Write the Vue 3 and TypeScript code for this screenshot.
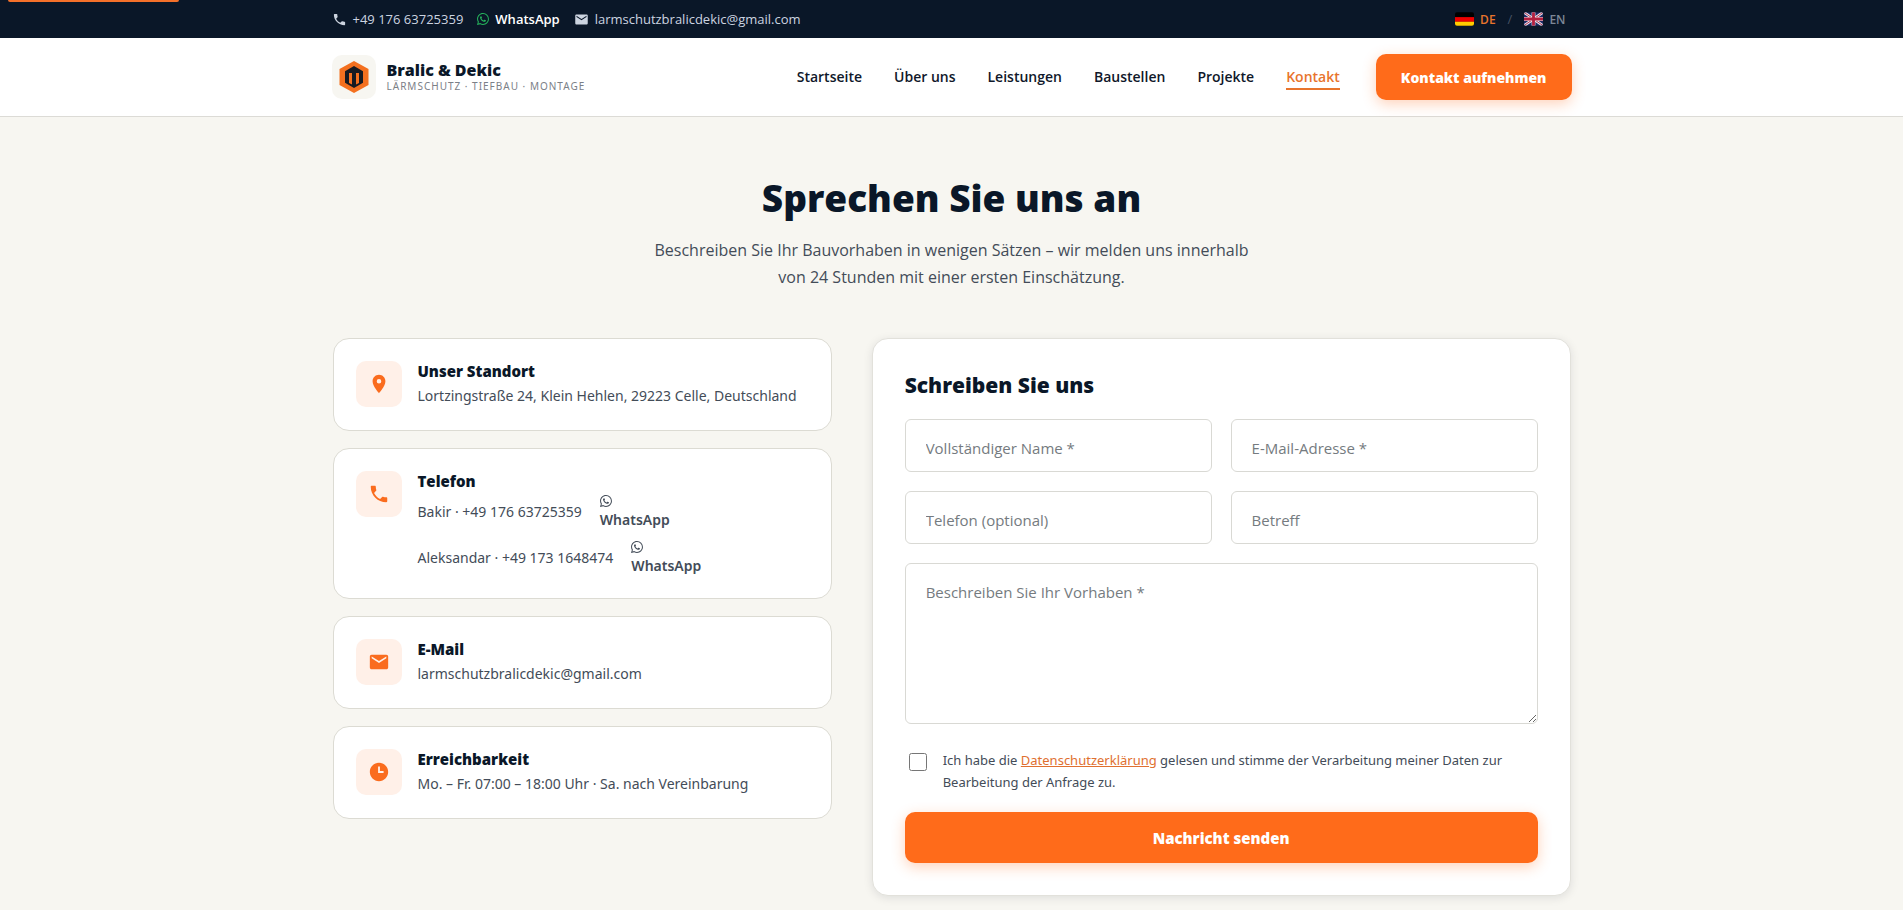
<script setup lang="ts">
import { ref } from 'vue'

interface NavItem { label: string; href: string; active?: boolean }
interface InfoCard { title: string; icon: string; text?: string; href?: string }

const nav: NavItem[] = [
  { label: 'Startseite', href: '#start' },
  { label: 'Über uns', href: '#ueber-uns' },
  { label: 'Leistungen', href: '#leistungen' },
  { label: 'Baustellen', href: '#baustellen' },
  { label: 'Projekte', href: '#projekte' },
  { label: 'Kontakt', href: '#kontakt', active: true },
]

const icons: Record<string, string> = {
  pin: 'M12 2C8.13 2 5 5.13 5 9c0 5.25 7 13 7 13s7-7.75 7-13c0-3.87-3.13-7-7-7zm0 9.5a2.5 2.5 0 0 1 0-5 2.5 2.5 0 0 1 0 5z',
  phone: 'M6.62 10.79c1.44 2.83 3.76 5.14 6.59 6.59l2.2-2.2c.27-.27.67-.36 1.02-.24 1.12.37 2.33.57 3.57.57.55 0 1 .45 1 1V20c0 .55-.45 1-1 1-9.39 0-17-7.61-17-17 0-.55.45-1 1-1h3.5c.55 0 1 .45 1 1 0 1.25.2 2.45.57 3.57.11.35.03.74-.25 1.02l-2.2 2.2z',
  mail: 'M20 4H4c-1.1 0-1.99.9-1.99 2L2 18c0 1.1.9 2 2 2h16c1.1 0 2-.9 2-2V6c0-1.1-.9-2-2-2zm0 4l-8 5-8-5V6l8 5 8-5v2z',
  clock: 'M12 2C6.48 2 2 6.48 2 12s4.48 10 10 10 10-4.48 10-10S17.52 2 12 2zm5 11h-6V6h2v5h4v2z',
}
const whatsapp =
  'M13.601 2.326A7.85 7.85 0 0 0 7.994 0C3.627 0 .068 3.558.064 7.926c0 1.399.366 2.76 1.057 3.965L0 16l4.204-1.102a7.9 7.9 0 0 0 3.79.965h.004c4.368 0 7.926-3.558 7.93-7.93A7.9 7.9 0 0 0 13.6 2.326zM7.994 14.521a6.6 6.6 0 0 1-3.356-.92l-.24-.144-2.494.654.666-2.433-.156-.251a6.56 6.56 0 0 1-1.007-3.505c0-3.626 2.957-6.584 6.591-6.584a6.56 6.56 0 0 1 4.66 1.931 6.56 6.56 0 0 1 1.928 4.66c-.004 3.639-2.961 6.592-6.592 6.592m3.615-4.934c-.197-.099-1.17-.578-1.353-.646-.182-.065-.315-.099-.445.099-.133.197-.513.646-.627.775-.114.133-.232.148-.43.05-.197-.1-.836-.308-1.592-.985-.59-.525-.985-1.175-1.103-1.372-.114-.198-.011-.304.088-.403.087-.088.197-.232.296-.346.1-.114.133-.198.198-.33.065-.134.034-.248-.015-.347-.05-.099-.445-1.076-.612-1.47-.16-.389-.323-.335-.445-.34-.114-.007-.247-.007-.38-.007a.73.73 0 0 0-.529.247c-.182.198-.691.677-.691 1.654s.71 1.916.81 2.049c.098.133 1.394 2.132 3.383 2.992.47.205.84.326 1.129.418.475.152.904.129 1.246.08.38-.058 1.171-.48 1.338-.943.164-.464.164-.86.114-.943-.049-.084-.182-.133-.38-.232'

const cards: InfoCard[] = [
  { title: 'Unser Standort', icon: 'pin', text: 'Lortzingstraße 24, Klein Hehlen, 29223 Celle, Deutschland' },
  { title: 'Telefon', icon: 'phone' },
  { title: 'E-Mail', icon: 'mail', text: 'larmschutzbralicdekic@gmail.com', href: 'mailto:larmschutzbralicdekic@gmail.com' },
  { title: 'Erreichbarkeit', icon: 'clock', text: 'Mo. – Fr. 07:00 – 18:00 Uhr · Sa. nach Vereinbarung' },
]
const phones = [
  { name: 'Bakir', number: '+49 176 63725359' },
  { name: 'Aleksandar', number: '+49 173 1648474' },
]
const fields = [
  { id: 'name', type: 'text', label: 'Vollständiger Name *' },
  { id: 'email', type: 'email', label: 'E-Mail-Adresse *' },
  { id: 'phone', type: 'tel', label: 'Telefon (optional)' },
  { id: 'subject', type: 'text', label: 'Betreff' },
]
const values = ref<Record<string, string>>({ name: '', email: '', phone: '', subject: '' })
const message = ref('')
const consent = ref(false)
</script>

<template>
  <div class="page">
    <div class="accent" aria-hidden="true"></div>
    <div class="topbar">
      <div class="container topbar-row">
        <div class="contacts">
          <a href="tel:+4917663725359"><svg viewBox="0 0 24 24"><path :d="icons.phone" /></svg>+49 176 63725359</a>
          <a class="wa" href="#whatsapp"><svg viewBox="0 0 16 16"><path :d="whatsapp" /></svg>WhatsApp</a>
          <a href="mailto:larmschutzbralicdekic@gmail.com"><svg viewBox="0 0 24 24"><path :d="icons.mail" /></svg>larmschutzbralicdekic@gmail.com</a>
        </div>
        <div class="langs">
          <button type="button" class="lang current">
            <svg viewBox="0 0 20 14"><rect width="20" height="14" rx="2" fill="#000" /><path d="M0 5h20v5H0z" fill="#e00" /><path d="M0 10h20v2a2 2 0 0 1-2 2H2a2 2 0 0 1-2-2z" fill="#fc0" /></svg>DE
          </button>
          <span class="slash">/</span>
          <button type="button" class="lang">
            <svg viewBox="0 0 20 14">
              <clipPath id="uk"><rect width="20" height="14" rx="2" /></clipPath>
              <g clip-path="url(#uk)">
                <path d="M0 0h20v14H0z" fill="#1d2a66" />
                <path d="M0 0l20 14M20 0L0 14" stroke="#e6e3ea" stroke-width="3" />
                <path d="M0 0l20 14M20 0L0 14" stroke="#b3304f" stroke-width="1" />
                <path d="M10 0v14M0 7h20" stroke="#e6e3ea" stroke-width="4" />
                <path d="M10 0v14M0 7h20" stroke="#b3203f" stroke-width="3" />
              </g>
            </svg>EN
          </button>
        </div>
      </div>
    </div>

    <header class="header">
      <div class="container header-row">
        <a class="brand" href="#start">
          <span class="logo">
            <svg viewBox="0 0 30 32">
              <path d="M15 0l14.500 8v16L15 32 .5 24V8z" fill="#f4701f" />
              <path d="M15 5l9 5.300v11.400L15 27l-9-5.300V10.300z" fill="#171a22" />
              <path d="M10 12h3v11.500l-3-1.600zM17 12h3v9.900l-3 1.600z" fill="#f4701f" />
            </svg>
          </span>
          <span class="brand-text">
            <strong>Bralic &amp; Dekic</strong>
            <small>LÄRMSCHUTZ · TIEFBAU · MONTAGE</small>
          </span>
        </a>
        <nav class="nav">
          <a v-for="item in nav" :key="item.label" :href="item.href" :class="{ active: item.active }">{{ item.label }}</a>
          <button type="button" class="btn cta">Kontakt aufnehmen</button>
        </nav>
      </div>
    </header>

    <main class="container main">
      <section class="hero">
        <h1>Sprechen Sie uns an</h1>
        <p>Beschreiben Sie Ihr Bauvorhaben in wenigen Sätzen – wir melden uns innerhalb<br />von 24 Stunden mit einer ersten Einschätzung.</p>
      </section>

      <div class="grid">
        <div class="cards">
          <article v-for="card in cards" :key="card.title" class="card">
            <span class="badge"><svg viewBox="0 0 24 24"><path :d="icons[card.icon]" /></svg></span>
            <div class="card-body">
              <h3>{{ card.title }}</h3>
              <p v-if="card.text">
                <a v-if="card.href" :href="card.href">{{ card.text }}</a>
                <template v-else>{{ card.text }}</template>
              </p>
              <div v-else class="phones">
                <div v-for="p in phones" :key="p.name" class="phone">
                  <a :href="'tel:' + p.number.replaceAll(' ', '')">{{ p.name }} · {{ p.number }}</a>
                  <a class="chat" href="#whatsapp"><svg viewBox="0 0 16 16"><path :d="whatsapp" /></svg><span>WhatsApp</span></a>
                </div>
              </div>
            </div>
          </article>
        </div>

        <form class="form" @submit.prevent>
          <h2>Schreiben Sie uns</h2>
          <div class="fields">
            <input v-for="f in fields" :id="f.id" :key="f.id" v-model="values[f.id]" :type="f.type" :placeholder="f.label" :aria-label="f.label" />
            <textarea id="message" v-model="message" placeholder="Beschreiben Sie Ihr Vorhaben *" aria-label="Beschreiben Sie Ihr Vorhaben"></textarea>
          </div>
          <div class="consent">
            <input id="consent" v-model="consent" type="checkbox" />
            <label for="consent">Ich habe die <a href="#datenschutz">Datenschutzerklärung</a> gelesen und stimme der Verarbeitung meiner Daten zur Bearbeitung der Anfrage zu.</label>
          </div>
          <button type="submit" class="btn submit">Nachricht senden</button>
        </form>
      </div>
    </main>
  </div>
</template>

<style>
body {
  margin: 0;
  background: #f7f6f1;
}
</style>

<style scoped>
.page {
  position: relative;
  font-family: "Open Sans", "Noto Sans", sans-serif;
  font-size: 14px;
  line-height: 22px;
  color: #434c58;
}
.page *,
.page *::before {
  box-sizing: border-box;
}
a {
  color: inherit;
  text-decoration: none;
}
svg {
  flex: none;
  fill: currentColor;
}
button,
input,
textarea {
  font-family: inherit;
}
h1,
h2,
h3,
p {
  margin: 0;
}
h1,
h2,
h3,
.brand strong {
  color: #0a1728;
  font-weight: 800;
}
.container {
  max-width: 1240px;
  margin: 0 auto;
}
.accent {
  position: absolute;
  top: 0;
  left: 8px;
  width: 171px;
  height: 2px;
  border-radius: 0 0 2px 2px;
  background: #f4702a;
}
.topbar {
  background: #0a1728;
  color: #ccd4e0;
  font-size: 13px;
}
.topbar-row,
.header-row,
.contacts,
.contacts a,
.langs,
.lang,
.brand,
.nav {
  display: flex;
  align-items: center;
}
.topbar-row {
  justify-content: space-between;
  height: 38px;
}
.contacts {
  gap: 14px;
}
.contacts a {
  gap: 6px;
}
.contacts svg {
  width: 15px;
  height: 15px;
}
.contacts .wa {
  color: #fff;
  font-weight: 600;
}
.contacts .wa svg {
  width: 12px;
  height: 12px;
  color: #25b35c;
}
.langs {
  gap: 12px;
  padding-right: 6px;
}
.lang {
  gap: 6px;
  padding: 0;
  border: 0;
  background: none;
  color: #7d8796;
  font-size: 12px;
  font-weight: 600;
}
.lang svg {
  width: 19px;
  height: 14px;
}
.lang.current {
  color: #e8742c;
}
.slash {
  color: #465162;
}
.header {
  background: #fff;
  border-bottom: 1px solid #dcdbd6;
}
.header-row {
  justify-content: space-between;
  height: 78px;
}
.brand {
  gap: 11px;
}
.logo {
  display: grid;
  place-items: center;
  width: 44px;
  height: 44px;
  border-radius: 10px;
  background: #f7f6f1;
}
.logo svg {
  width: 30px;
  height: 32px;
}
.brand-text {
  display: flex;
  flex-direction: column;
}
.brand strong {
  font-size: 16px;
  line-height: 18px;
}
.brand small {
  font-family: "Noto Sans", "Open Sans", sans-serif;
  font-size: 10px;
  line-height: 14px;
  letter-spacing: 1px;
  color: #7b8087;
}
.nav {
  gap: 32px;
}
.nav a {
  color: #10182a;
  font-size: 14px;
  font-weight: 600;
}
.nav a.active {
  color: #e8742c;
  box-shadow: 0 2px 0 #e8742c;
}
.btn {
  border: 0;
  border-radius: 10px;
  background: #ff6b1a;
  box-shadow: 0 4px 14px rgb(255 107 26 / 30%);
  color: #fff;
  font-size: 14px;
  font-weight: 800;
  cursor: pointer;
}
.cta {
  height: 46px;
  margin-left: 4px;
  padding: 0 25px;
}
.main {
  max-width: 1238px;
  padding: 58px 0 14px;
}
.hero {
  margin-bottom: 47px;
  text-align: center;
}
.hero h1 {
  font-size: 37px;
  line-height: 46px;
}
.hero p {
  margin-top: 16px;
  font-size: 16px;
  line-height: 27px;
}
.grid {
  display: grid;
  grid-template-columns: 5fr 7fr;
  gap: 40px;
  align-items: start;
}
.cards {
  display: flex;
  flex-direction: column;
  gap: 17px;
}
.card {
  display: flex;
  gap: 16px;
  padding: 22px;
  border: 1px solid #dcdbd3;
  border-radius: 16px;
  background: #fff;
}
.badge {
  display: grid;
  flex: none;
  place-items: center;
  width: 46px;
  height: 46px;
  border-radius: 10px;
  background: #fff0e8;
  color: #fa6c1e;
}
.badge svg {
  width: 22px;
  height: 22px;
}
.card-body {
  font-family: "Noto Sans", "Open Sans", sans-serif;
}
.card h3 {
  margin-bottom: 3px;
  font-family: "Open Sans", "Noto Sans", sans-serif;
  font-size: 15px;
  line-height: 20px;
}
.card p {
  line-height: 24px;
}
.phones {
  display: flex;
  flex-direction: column;
  gap: 10px;
}
.phone {
  display: flex;
  align-items: center;
  gap: 18px;
  height: 36px;
}
.chat {
  display: flex;
  flex-direction: column;
  gap: 3px;
  font-weight: 600;
  line-height: 20px;
}
.chat svg {
  width: 12px;
  height: 12px;
}
.form {
  padding: 32px;
  border: 1px solid #e2e1db;
  border-radius: 16px;
  background: #fff;
  box-shadow: 0 2px 10px rgb(10 23 40 / 10%);
}
.form h2 {
  font-size: 21px;
  line-height: 28px;
}
.fields {
  display: grid;
  grid-template-columns: 1fr 1fr;
  gap: 19px;
  margin-top: 20px;
}
.fields input,
.fields textarea {
  width: 100%;
  height: 53px;
  padding: 16px 20px 12px;
  border: 1px solid #d9d9d4;
  border-radius: 6px;
  background: #fff;
  color: #0a1728;
  font-size: 15px;
  line-height: 24px;
}
.fields textarea {
  display: block;
  grid-column: 1 / -1;
  height: 161px;
  resize: vertical;
}
.fields ::placeholder {
  color: #757b80;
  opacity: 1;
}
.consent {
  display: flex;
  align-items: flex-start;
  gap: 16px;
  margin: 25px 0 19px;
  font-family: "Noto Sans", "Open Sans", sans-serif;
  font-size: 13px;
}
.consent input {
  flex: none;
  width: 18px;
  height: 18px;
  margin: 4px 0 0 4px;
}
.consent a {
  color: #e07030;
  text-decoration: underline;
}
.submit {
  display: block;
  width: 100%;
  height: 51px;
  font-size: 15px;
}
</style>
